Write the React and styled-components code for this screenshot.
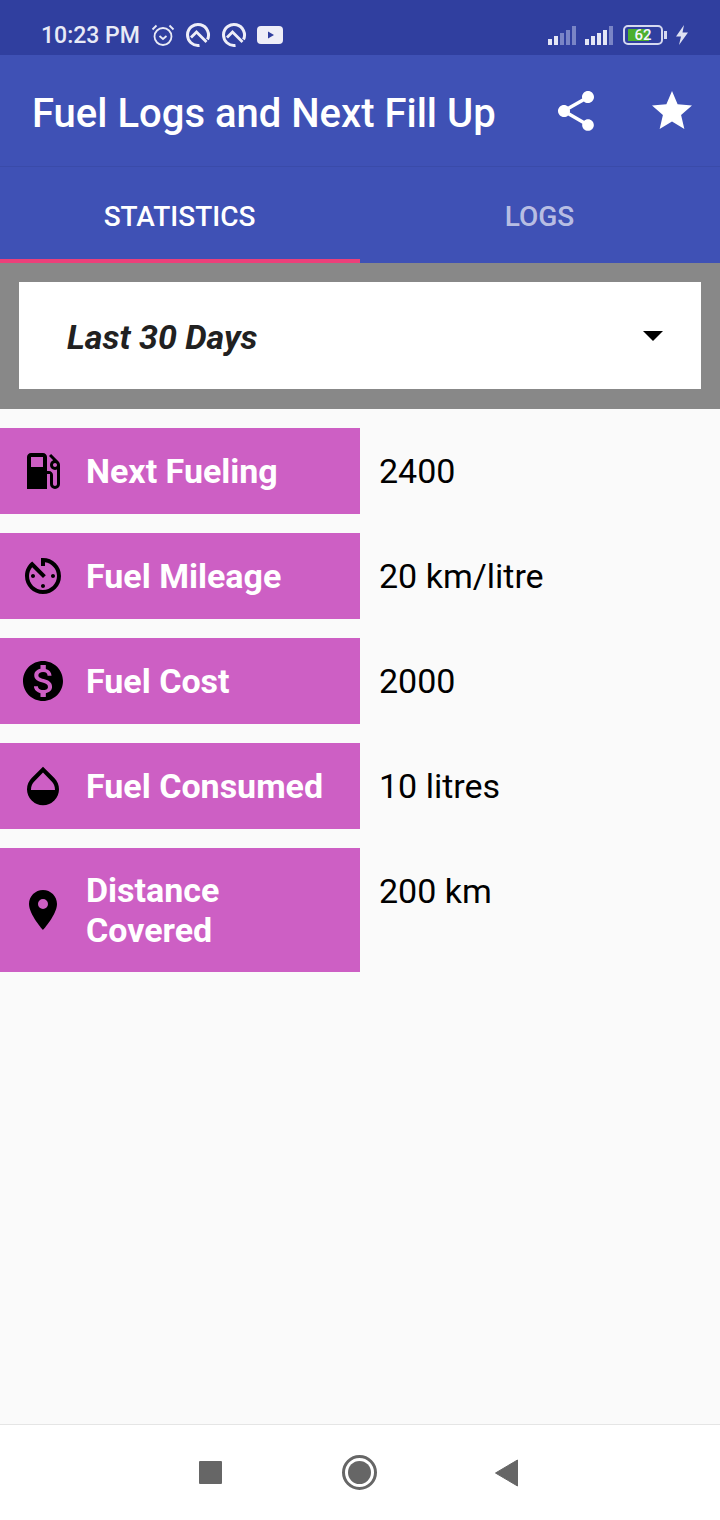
import styled, { createGlobalStyle } from "styled-components";
import {
  MdAvTimer,
  MdLocalGasStation,
  MdMonetizationOn,
  MdOpacity,
  MdPlace,
  MdShare,
  MdStar,
} from "react-icons/md";

const GlobalStyle = createGlobalStyle`
  html, body { margin: 0; padding: 0; background: #fafafa; }
  * { box-sizing: border-box; }
`;

const stats = [
  { Icon: MdLocalGasStation, label: "Next Fueling", value: "2400" },
  { Icon: MdAvTimer, label: "Fuel Mileage", value: "20 km/litre" },
  { Icon: MdMonetizationOn, label: "Fuel Cost", value: "2000" },
  { Icon: MdOpacity, label: "Fuel Consumed", value: "10 litres" },
  { Icon: MdPlace, label: "Distance Covered", value: "200 km" },
];

const App = () => {
  return (
    <Screen>
      <GlobalStyle />
      <StatusBar>
        <StatusLeft>
          <Time>10:23 PM</Time>
          <svg width="24" height="24" viewBox="0 0 24 24" fill="none" stroke="#e8eaf6">
            <circle cx="12" cy="13.500" r="8.500" strokeWidth="1.800" />
            <path d="M8.500 13L12 16L15.500 13M1.500 6.500L5.500 2.500M22.500 6.500L18.500 2.500" strokeWidth="1.800" />
          </svg>
          <QIcon />
          <QIcon />
          <svg width="28" height="20" viewBox="0 0 28 20">
            <rect y="1" width="26" height="18" rx="4" fill="#eeeef8" />
            <path d="M11 6.500L17 10L11 13.500Z" fill="#303f9f" />
          </svg>
        </StatusLeft>
        <StatusRight>
          <Signal $active={2} />
          <Signal $active={4} />
          <Battery>
            <BatteryBody>
              <BatteryFill />
              <BatteryText>62</BatteryText>
            </BatteryBody>
            <BatteryTip />
          </Battery>
          <svg width="14" height="20" viewBox="0 0 14 20">
            <path d="M9 0L1 11.500H6L4 20L13 7.500H7.500Z" fill="#dfe2f3" />
          </svg>
        </StatusRight>
      </StatusBar>

      <Toolbar>
        <Title>Fuel Logs and Next Fill Up</Title>
        <ToolbarActions>
          <MdShare size={48} color="#fff" />
          <MdStar size={48} color="#fff" />
        </ToolbarActions>
      </Toolbar>

      <Tabs>
        <Tab $active>STATISTICS</Tab>
        <Tab>LOGS</Tab>
      </Tabs>

      <FilterBand>
        <Select>
          <SelectLabel>Last 30 Days</SelectLabel>
          <Caret />
        </Select>
      </FilterBand>

      <StatList>
        {stats.map(({ Icon, label, value }) => (
          <StatRow key={label}>
            <StatLabel>
              <Icon size={48} color="#000" />
              <LabelText>{label}</LabelText>
            </StatLabel>
            <StatValue>{value}</StatValue>
          </StatRow>
        ))}
      </StatList>

      <NavBar>
        <NavSquare />
        <NavCircle>
          <NavDot />
        </NavCircle>
        <svg width="23" height="28" viewBox="0 0 23 28">
          <path d="M22.500 1V27L.5 14Z" fill="#666" stroke="#666" strokeLinejoin="round" />
        </svg>
      </NavBar>
    </Screen>
  );
};

const QIcon = () => (
  <svg width="26" height="26" viewBox="0 0 26 26" fill="none" stroke="#eeeef8">
    <path d="M14.500 23.400A10.500 10.500 0 1 1 22.500 17.500" strokeWidth="3" />
    <path d="M6 15.500L11.500 10L21.500 20" strokeWidth="2.800" />
  </svg>
);

const Signal = ({ $active }) => (
  <SignalBars>
    {[7, 10, 13, 16, 20].map((h, i) => (
      <SignalBar key={h} $h={h} $on={i < $active} />
    ))}
  </SignalBars>
);

export default App;

const Screen = styled.div`
  width: 720px;
  height: 1520px;
  display: flex;
  flex-direction: column;
  background: #fafafa;
  font-family: Roboto, "Liberation Sans", sans-serif;
  overflow: hidden;
`;

const StatusBar = styled.div`
  height: 55px;
  flex: none;
  padding: 15px 31px 0 41px;
  display: flex;
  align-items: center;
  justify-content: space-between;
  background: #303f9f;
`;

const StatusLeft = styled.div`
  display: flex;
  align-items: center;
  gap: 10px;
`;

const Time = styled.span`
  font-size: 23px;
  font-weight: 500;
  color: #e8eaf6;
  margin-right: 1px;
`;

const StatusRight = styled.div`
  display: flex;
  align-items: center;
  gap: 8px;
`;

const SignalBars = styled.div`
  display: flex;
  align-items: flex-end;
  gap: 2px;
  height: 20px;
  margin-right: 1px;
`;

const SignalBar = styled.span`
  width: 4px;
  height: ${(props) => props.$h - 1}px;
  background: ${(props) => (props.$on ? "#e4e6f5" : "#7a85c6")};
`;

const Battery = styled.div`
  display: flex;
  align-items: center;
  gap: 1px;
  margin-left: 1px;
`;

const BatteryBody = styled.div`
  width: 40px;
  height: 20px;
  padding: 2px 3px;
  border: 2.500px solid #d5d9f0;
  border-radius: 5px;
  display: flex;
  align-items: center;
  justify-content: center;
  overflow: hidden;
  position: relative;
`;

const BatteryFill = styled.span`
  position: absolute;
  left: 3px;
  top: 2px;
  bottom: 2px;
  width: 21px;
  background: #4caf2f;
`;

const BatteryText = styled.span`
  position: relative;
  font-size: 15px;
  font-weight: 500;
  line-height: 15px;
  color: #f4f6ff;
`;

const BatteryTip = styled.span`
  width: 3px;
  height: 8px;
  background: #d5d9f0;
`;

const Toolbar = styled.div`
  height: 112px;
  flex: none;
  padding: 0 24px 0 32px;
  display: flex;
  align-items: center;
  justify-content: space-between;
  background: #3f51b5;
  border-bottom: 1px solid #3a4ba9;
`;

const Title = styled.div`
  padding-top: 5px;
  font-size: 40px;
  font-weight: 500;
  color: #fff;
`;

const ToolbarActions = styled.div`
  display: flex;
  align-items: center;
  gap: 48px;
`;

const Tabs = styled.div`
  height: 96px;
  flex: none;
  display: flex;
  background: #3f51b5;
`;

const Tab = styled.div`
  flex: 1;
  display: flex;
  align-items: center;
  justify-content: center;
  padding: 6px 1px 0 0;
  font-size: 28px;
  font-weight: 500;
  color: ${(props) => (props.$active ? "#fff" : "rgba(255,255,255,0.65)")};
  border-bottom: 4px solid ${(props) => (props.$active ? "#ec407a" : "transparent")};
`;

const FilterBand = styled.div`
  flex: none;
  padding: 19px 19px 20px;
  background: #888888;
`;

const Select = styled.div`
  height: 107px;
  padding: 0 38px 0 48px;
  display: flex;
  align-items: center;
  justify-content: space-between;
  background: #fff;
`;

const SelectLabel = styled.span`
  padding-top: 3px;
  font-size: 34px;
  font-weight: 700;
  font-style: italic;
  color: #212121;
`;

const Caret = styled.span`
  width: 0;
  height: 0;
  border-left: 10px solid transparent;
  border-right: 10px solid transparent;
  border-top: 10px solid #000;
`;

const StatList = styled.div`
  flex: 1;
  padding-top: 19px;
  display: flex;
  flex-direction: column;
  gap: 19px;
`;

const StatRow = styled.div`
  display: flex;
  align-items: flex-start;
`;

const StatLabel = styled.div`
  width: 360px;
  min-height: 86px;
  flex: none;
  padding: 0 19px;
  display: flex;
  align-items: center;
  gap: 19px;
  background: #cd5fc4;

  & > svg {
    flex: none;
  }
`;

const LabelText = styled.div`
  padding: 22px 0;
  font-size: 34px;
  font-weight: 700;
  line-height: 40px;
  color: #fff;
`;

const StatValue = styled.div`
  padding: 23px 0 0 19px;
  font-size: 34px;
  line-height: 40px;
  color: #000;
`;

const NavBar = styled.div`
  height: 96px;
  flex: none;
  padding-right: 3px;
  display: flex;
  align-items: center;
  justify-content: center;
  gap: 118px;
  background: #fff;
  border-top: 1px solid #e5e5e5;
`;

const NavSquare = styled.span`
  width: 23px;
  height: 23px;
  margin-right: 2px;
  border-radius: 1px;
  background: #666;
`;

const NavCircle = styled.span`
  width: 35px;
  height: 35px;
  display: flex;
  align-items: center;
  justify-content: center;
  border: 3px solid #666;
  border-radius: 50%;
`;

const NavDot = styled.span`
  width: 23px;
  height: 23px;
  border-radius: 50%;
  background: #666;
`;
